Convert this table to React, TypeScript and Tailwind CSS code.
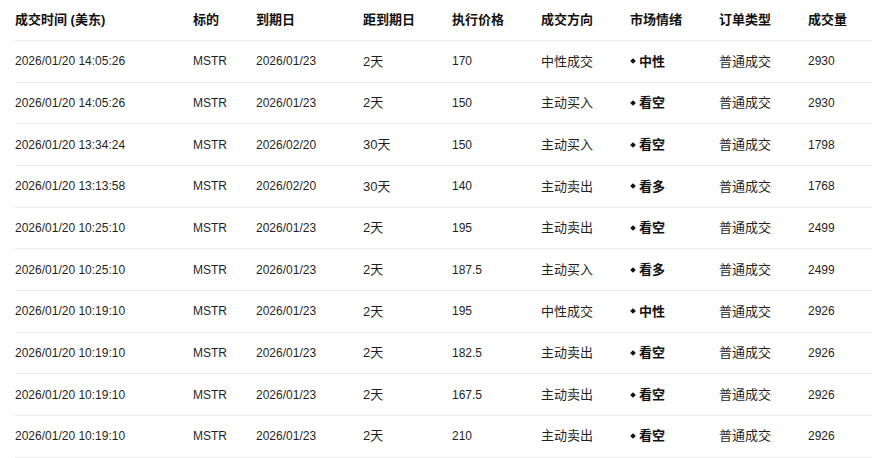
import React from "react";

type Trade = {
  time: string;
  symbol: string;
  expiry: string;
  days: string;
  strike: string;
  side: string;
  mood: string;
  kind: string;
  volume: string;
};

const trades: Trade[] = [
  { time: "2026/01/20 14:05:26", symbol: "MSTR", expiry: "2026/01/23", days: "2天", strike: "170", side: "中性成交", mood: "中性", kind: "普通成交", volume: "2930" },
  { time: "2026/01/20 14:05:26", symbol: "MSTR", expiry: "2026/01/23", days: "2天", strike: "150", side: "主动买入", mood: "看空", kind: "普通成交", volume: "2930" },
  { time: "2026/01/20 13:34:24", symbol: "MSTR", expiry: "2026/02/20", days: "30天", strike: "150", side: "主动买入", mood: "看空", kind: "普通成交", volume: "1798" },
  { time: "2026/01/20 13:13:58", symbol: "MSTR", expiry: "2026/02/20", days: "30天", strike: "140", side: "主动卖出", mood: "看多", kind: "普通成交", volume: "1768" },
  { time: "2026/01/20 10:25:10", symbol: "MSTR", expiry: "2026/01/23", days: "2天", strike: "195", side: "主动卖出", mood: "看空", kind: "普通成交", volume: "2499" },
  { time: "2026/01/20 10:25:10", symbol: "MSTR", expiry: "2026/01/23", days: "2天", strike: "187.5", side: "主动买入", mood: "看多", kind: "普通成交", volume: "2499" },
  { time: "2026/01/20 10:19:10", symbol: "MSTR", expiry: "2026/01/23", days: "2天", strike: "195", side: "中性成交", mood: "中性", kind: "普通成交", volume: "2926" },
  { time: "2026/01/20 10:19:10", symbol: "MSTR", expiry: "2026/01/23", days: "2天", strike: "182.5", side: "主动卖出", mood: "看空", kind: "普通成交", volume: "2926" },
  { time: "2026/01/20 10:19:10", symbol: "MSTR", expiry: "2026/01/23", days: "2天", strike: "167.5", side: "主动卖出", mood: "看空", kind: "普通成交", volume: "2926" },
  { time: "2026/01/20 10:19:10", symbol: "MSTR", expiry: "2026/01/23", days: "2天", strike: "210", side: "主动卖出", mood: "看空", kind: "普通成交", volume: "2926" },
];

const cols = "grid grid-cols-[178px_63px_107px_89px_89px_89px_89px_89px_89px]";
const num = "text-[12px]";
const cjk = "text-[13px]";

export default function App() {
  return (
    <div
      className="w-[872px] h-[458px] overflow-hidden bg-white pl-[15px] text-[#1f1f1f]"
      style={{ fontFamily: '"Liberation Sans", "Noto Sans CJK SC", sans-serif' }}
    >
      <div className="w-[900px]">
        <div className={`${cols} h-[41px] items-center border-b border-[#ececec] text-[13px] font-bold text-[#111]`}>
          <div>成交时间 (美东)</div>
          <div>标的</div>
          <div>到期日</div>
          <div>距到期日</div>
          <div>执行价格</div>
          <div>成交方向</div>
          <div>市场情绪</div>
          <div>订单类型</div>
          <div>成交量</div>
        </div>
        {trades.map((t, i) => (
          <div key={i} className={`${cols} h-[41.67px] items-center border-b border-[#ececec]`}>
            <div className={num}>{t.time}</div>
            <div className={num}>{t.symbol}</div>
            <div className={num}>{t.expiry}</div>
            <div className={cjk}>{t.days}</div>
            <div className={num}>{t.strike}</div>
            <div className={cjk}>{t.side}</div>
            <div className={`${cjk} flex items-center gap-[4px] font-bold text-[#111]`}>
              <span className="ml-[1px] inline-block h-[4px] w-[4px] rotate-45 bg-[#111]" />
              <span>{t.mood}</span>
            </div>
            <div className={cjk}>{t.kind}</div>
            <div className={num}>{t.volume}</div>
          </div>
        ))}
      </div>
    </div>
  );
}
